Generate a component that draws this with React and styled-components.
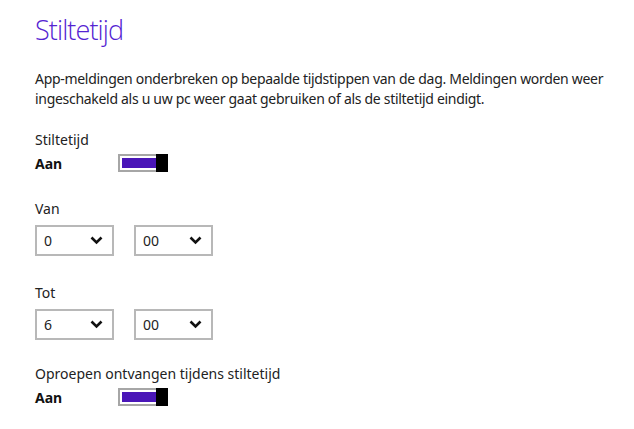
import React from "react";
import styled, { createGlobalStyle } from "styled-components";

const Global = createGlobalStyle`
  html, body { margin: 0; padding: 0; background: #fff; }
  body { font-family: "Noto Sans", "Open Sans", sans-serif; color: #1f1f1f; }
`;

const Page = styled.div`
  width: 634px;
  height: 429px;
  box-sizing: border-box;
  padding: 11px 0 0 35px;
  overflow: hidden;
`;

const Title = styled.h1`
  margin: 0;
  font-family: "Open Sans", sans-serif;
  font-weight: 300;
  font-size: 27px;
  line-height: 38px;
  color: #5423d2;
  letter-spacing: -0.9px;
`;

const Intro = styled.p`
  margin: 20px 0 0 0;
  font-size: 14px;
  line-height: 20px;
  color: #222;
  white-space: nowrap;
  letter-spacing: -0.3px;
`;

const Section = styled.div`
  margin-top: ${(p) => p.$top}px;
  display: flex;
  flex-direction: column;
`;

const Label = styled.div`
  font-size: 14px;
  line-height: 20px;
  color: #222;
`;

const ToggleRow = styled.div`
  display: flex;
  align-items: center;
  height: 24px;
  margin-top: 1px;
`;

const State = styled.span`
  width: 83px;
  font-size: 14px;
  font-weight: 700;
  color: #111;
`;

const Track = styled.div`
  width: 50px;
  height: 18px;
  display: flex;
  box-sizing: border-box;
`;

const Fill = styled.div`
  flex: 1;
  box-sizing: border-box;
  border: 2px solid #a6a6a6;
  border-right: none;
  padding: 2px 0 2px 2px;
  display: flex;
`;

const FillInner = styled.div`
  flex: 1;
  background: #4a16b8;
`;

const Thumb = styled.div`
  width: 12px;
  background: #000;
`;

const Selects = styled.div`
  display: flex;
  gap: 20px;
  margin-top: 6px;
`;

const Select = styled.div`
  width: 79px;
  height: 31px;
  box-sizing: border-box;
  border: 2px solid #b8b8b8;
  display: flex;
  align-items: center;
  justify-content: space-between;
  padding: 0 9px 0 7px;
  font-size: 14px;
  color: #222;
`;

const Toggle = () => (
  <Track>
    <Fill>
      <FillInner />
    </Fill>
    <Thumb />
  </Track>
);

const Chevron = () => (
  <svg width="13" height="9" viewBox="0 0 13 9">
    <path d="M1.5 1.5 L6.5 6.5 L11.5 1.5" fill="none" stroke="#111" strokeWidth="2.6" />
  </svg>
);

const Dropdown = ({ value }) => (
  <Select>
    <span>{value}</span>
    <Chevron />
  </Select>
);

export default function App() {
  return (
    <>
      <Global />
      <Page>
        <Title>Stiltetijd</Title>
        <Intro>
          App-meldingen onderbreken op bepaalde tijdstippen van de dag. Meldingen worden weer
          <br />
          ingeschakeld als u uw pc weer gaat gebruiken of als de stiltetijd eindigt.
        </Intro>
        <Section $top={21}>
          <Label>Stiltetijd</Label>
          <ToggleRow>
            <State>Aan</State>
            <Toggle />
          </ToggleRow>
        </Section>
        <Section $top={24}>
          <Label>Van</Label>
          <Selects>
            <Dropdown value="0" />
            <Dropdown value="00" />
          </Selects>
        </Section>
        <Section $top={27}>
          <Label>Tot</Label>
          <Selects>
            <Dropdown value="6" />
            <Dropdown value="00" />
          </Selects>
        </Section>
        <Section $top={24}>
          <Label>Oproepen ontvangen tijdens stiltetijd</Label>
          <ToggleRow>
            <State>Aan</State>
            <Toggle />
          </ToggleRow>
        </Section>
      </Page>
    </>
  );
}
